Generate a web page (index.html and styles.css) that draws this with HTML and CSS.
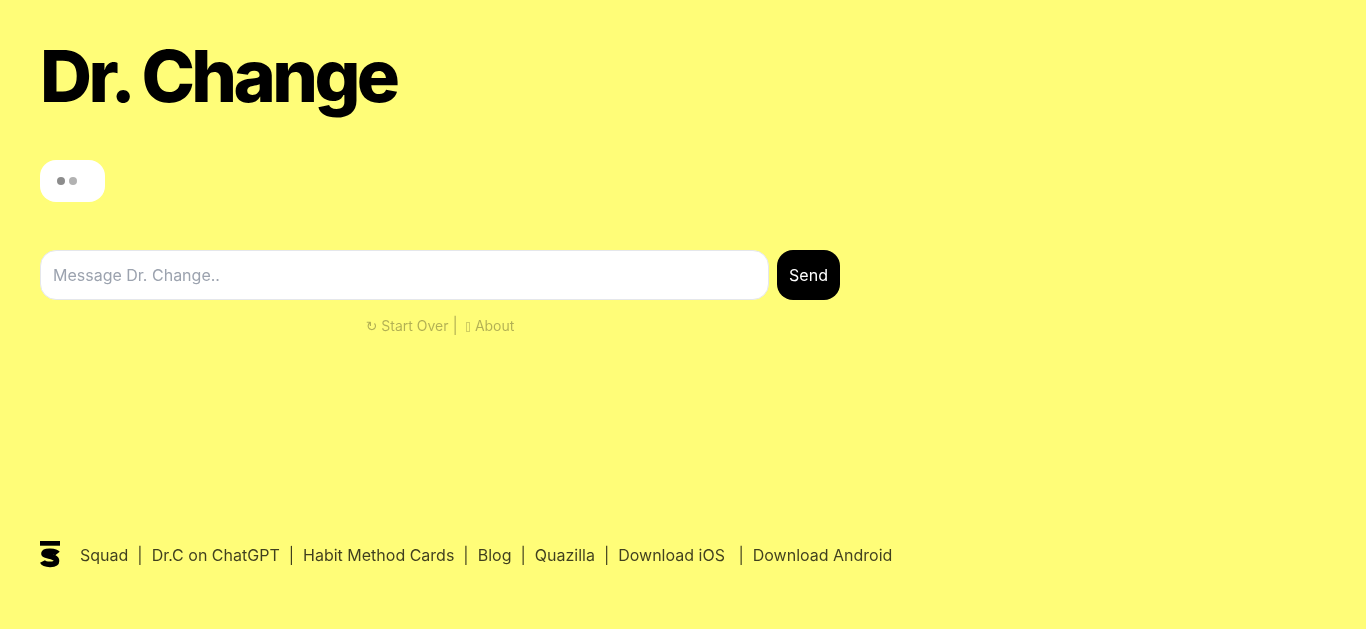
FILE: index.html
```html
<!DOCTYPE html>
<html lang="en">
<head>
  <meta charset="UTF-8">
  <meta name="viewport" content="width=device-width, initial-scale=1.0">
  <title>Dr. Change</title>
  <link rel="stylesheet" href="styles.css">
</head>
<body>
  <main class="page">
    <h1 class="title">Dr. Change</h1>

    <div class="bubble">
      <span class="dot dot-one"></span>
      <span class="dot dot-two"></span>
      <span class="dot dot-three"></span>
    </div>

    <form class="chat-form">
      <input class="chat-input" type="text" placeholder="Message Dr. Change..">
      <button class="send" type="button">Send</button>
    </form>

    <div class="actions">
      <a href="#"><span class="reload">↻</span> Start Over</a>
      <span class="actions-sep">|</span>
      <a href="#"><span class="tofu"></span>About</a>
    </div>
  </main>

  <footer class="footer">
    <svg class="logo" viewBox="0 0 20 28" width="20" height="28" aria-hidden="true">
      <rect x="0" y="0" width="20" height="4.700" fill="#000"/>
      <path d="M17.500 12.500C15.500 9.800 4.500 9.200 4 12.300 3.600 15.800 16.500 14.200 16.500 20 16.500 24.500 4.500 24.300 2.500 20.500" fill="none" stroke="#000" stroke-width="5.600"/>
    </svg>
    <nav class="footer-links">
      <a href="#">Squad</a>
      <span class="sep">|</span>
      <a href="#">Dr.C on ChatGPT</a>
      <span class="sep">|</span>
      <a href="#">Habit Method Cards</a>
      <span class="sep">|</span>
      <a href="#">Blog</a>
      <span class="sep">|</span>
      <a href="#">Quazilla</a>
      <span class="sep">|</span>
      <a class="ios" href="#">Download iOS</a>
      <span class="sep">|</span>
      <a href="#">Download Android</a>
    </nav>
  </footer>
</body>
</html>
```

FILE: styles.css
```css
* {
  box-sizing: border-box;
}
html, body {
  height: 100%;
}
body {
  margin: 0;
  background-color: #fffd78;
  color: #000;
  font-family: Inter, "Liberation Sans", sans-serif;
  display: flex;
  flex-direction: column;
  justify-content: space-between;
  overflow: hidden;
}
a {
  color: inherit;
  text-decoration: none;
}
.page {
  padding: 36px 40px 0;
  width: 880px;
  will-change: transform; /* keeps text antialiasing grey */
}
.title {
  margin: 0;
  font-size: 72px;
  line-height: 80px;
  font-weight: 800;
  letter-spacing: -3.6px;
}
.bubble {
  display: inline-flex;
  gap: 4px;
  margin-top: 44px;
  padding: 17px 16px 17px 17px;
  background: #fff;
  border-radius: 16px;
  vertical-align: top;
}
.dot {
  width: 8px;
  height: 8px;
  border-radius: 50%;
  background: #666;
}
.dot-one {
  opacity: 0.75;
}
.dot-two {
  opacity: 0.5;
}
.dot-three {
  opacity: 0;
}
.chat-form {
  display: flex;
  gap: 8px;
  margin-top: 48px;
}
.chat-input {
  flex: 1;
  height: 50px;
  padding: 0 12px;
  border: 1px solid #e5e7eb;
  border-radius: 16px;
  background: #fff;
  font: 16px Inter, "Liberation Sans", sans-serif;
  outline: none;
}
.chat-input::placeholder {
  color: #9ca3af;
  opacity: 1;
}
.send {
  width: 63px;
  height: 50px;
  border: none;
  border-radius: 16px;
  background: #000;
  color: #fff;
  font: 16px Inter, "Liberation Sans", sans-serif;
  cursor: pointer;
}
.actions {
  display: flex;
  justify-content: center;
  align-items: center;
  gap: 4px;
  margin-top: 15px;
  height: 20px;
  font-size: 14px;
  color: #000;
  opacity: 0.3;
}
.reload {
  font-family: "DejaVu Sans", sans-serif;
  font-size: 14px;
}
.actions-sep {
  margin-right: 4px;
  font-size: 16px;
}
.tofu {
  display: inline-block;
  width: 4px;
  height: 10px;
  margin-right: 5px;
  border: 1px solid #000;
  opacity: 0.6;
  vertical-align: -1px;
}
.footer {
  display: flex;
  align-items: center;
  gap: 20px;
  padding: 0 40px 60px;
  font-size: 16px;
}
.logo {
  display: block;
}
.footer-links {
  display: flex;
  gap: 9px;
  line-height: 28px;
  opacity: 0.75;
  will-change: transform;
}
.ios {
  margin-right: 4.500px;
}
```
